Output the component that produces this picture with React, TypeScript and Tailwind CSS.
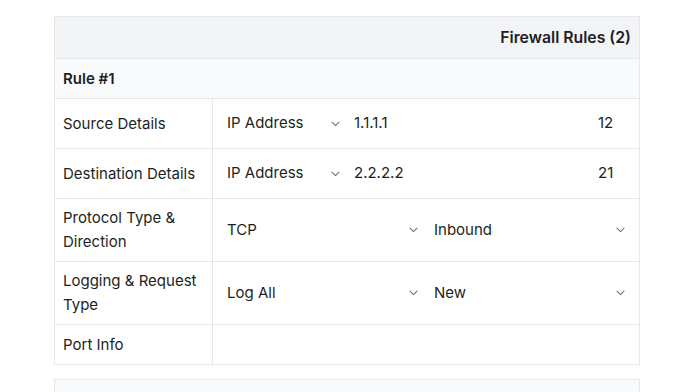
import React from "react";

const Chevron = () => (
  <svg width="9" height="6" viewBox="0 0 9 6" fill="none" className="shrink-0">
    <path d="M1 1.2 L4.5 4.6 L8 1.2" stroke="#6b7280" strokeWidth="1.1" strokeLinecap="round" strokeLinejoin="round" />
  </svg>
);

const Select = ({ value, className }: { value: string; className: string }) => (
  <div className={`flex items-center justify-between pl-1.5 pr-1.5 h-[34px] ${className}`}>
    <span>{value}</span>
    <Chevron />
  </div>
);

const Row = ({ label, children, h }: { label: React.ReactNode; children?: React.ReactNode; h: string }) => (
  <div className={`flex border-t border-[#e5e7eb] ${h}`}>
    <div className="w-[158px] shrink-0 border-r border-[#e5e7eb] px-2 flex items-center leading-6">{label}</div>
    <div className="flex-1 px-2 flex items-center">{children}</div>
  </div>
);

export default function App() {
  return (
    <div className="w-[700px] h-[392px] bg-white overflow-hidden pt-4 px-[54px] text-[#1c1f23]" style={{ fontFamily: "Inter, 'Liberation Sans', sans-serif" }}>
      <div className="text-[15px] w-[586px]">
        <div className="border border-[#e5e7eb]">
          <div className="h-[41px] bg-[#f3f4f6] flex items-center justify-end px-2 pt-px font-semibold text-[15.8px]">Firewall Rules (2)</div>
          <div className="h-[40px] bg-[#f9fafb] border-t border-[#e5e7eb] flex items-center px-2 pt-px font-semibold">Rule #1</div>
          <Row label="Source Details" h="h-[50px]">
            <Select value="IP Address" className="w-[125px]" />
            <div className="flex-1 pl-2">1.1.1.1</div>
            <div className="w-[33px]">12</div>
          </Row>
          <Row label="Destination Details" h="h-[50px]">
            <Select value="IP Address" className="w-[125px]" />
            <div className="flex-1 pl-2">2.2.2.2</div>
            <div className="w-[33px]">21</div>
          </Row>
          <Row label={<span>Protocol Type &amp;<br />Direction</span>} h="h-[63px]">
            <Select value="TCP" className="flex-1" />
            <Select value="Inbound" className="flex-1 ml-1" />
          </Row>
          <Row label={<span>Logging &amp; Request<br />Type</span>} h="h-[63px]">
            <Select value="Log All" className="flex-1" />
            <Select value="New" className="flex-1 ml-1" />
          </Row>
          <Row label="Port Info" h="h-[40px]" />
        </div>
        <div className="mt-[14px] border border-[#e5e7eb] bg-[#f9fafb] h-[40px]" />
      </div>
    </div>
  );
}
